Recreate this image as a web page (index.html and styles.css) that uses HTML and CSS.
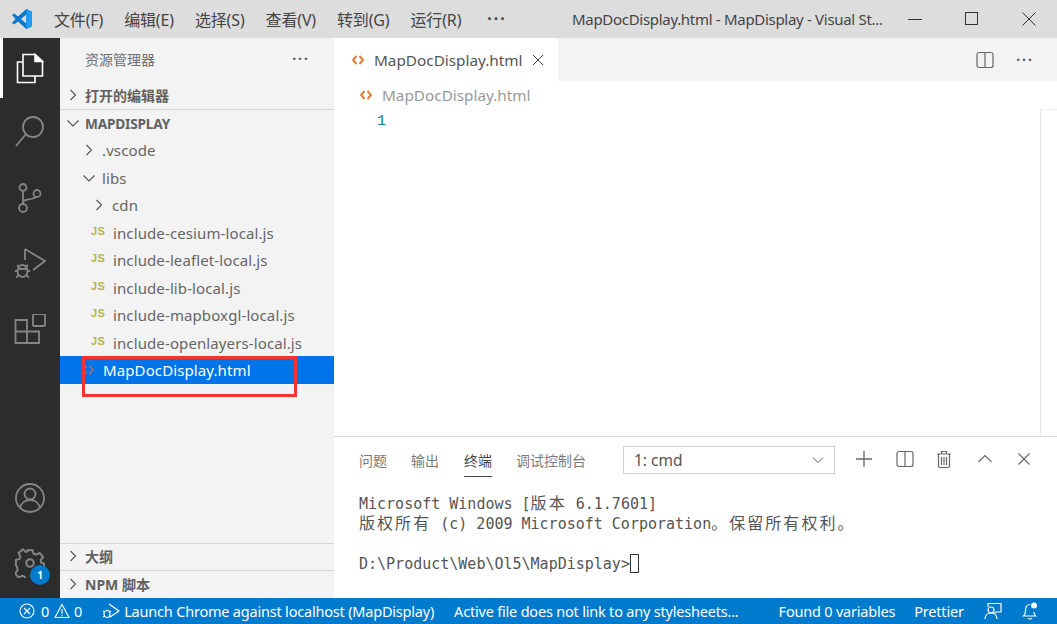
FILE: index.html
```html
<!DOCTYPE html>
<html lang="zh">
<head>
<meta charset="utf-8">
<title>MapDocDisplay.html - MapDisplay</title>
<link rel="stylesheet" href="styles.css">
</head>
<body>
<div class="app">
  <header class="titlebar">
    <svg class="logo" viewBox="0 0 20 20" width="20" height="20"><path fill="#0a78c8" fill-rule="evenodd" d="M14.300 0 20 2.800V17.200L14.300 20 6 12.500 2 15.500 0 14 3.600 10 0 6 2 4.500 6 7.500zM14.300 5.500 9 10l5.300 4.500z"/><path fill="#1f9cf0" d="M14.300 0 20 2.800V17.200L14.300 20z"/></svg>
    <nav class="menu">
      <span>文件(F)</span><span>编辑(E)</span><span>选择(S)</span><span>查看(V)</span><span>转到(G)</span><span>运行(R)</span><span class="menu-more">···</span>
    </nav>
    <div class="wintitle">MapDocDisplay.html - MapDisplay - Visual St...</div>
    <div class="winbtns">
      <svg width="14" height="14" viewBox="0 0 14 14"><path d="M0 7.500h14" stroke="#333" fill="none"/></svg>
      <svg width="14" height="14" viewBox="0 0 14 14"><rect x=".5" y=".5" width="12" height="12" stroke="#333" fill="none"/></svg>
      <svg width="14" height="14" viewBox="0 0 14 14"><path d="M.5.5l13 13M13.500.5l-13 13" stroke="#333" fill="none"/></svg>
    </div>
  </header>
  <div class="main">
    <aside class="activity">
      <div class="act act-active">
        <svg width="28" height="31" viewBox="0 0 28 31" fill="none" stroke="#fff" stroke-width="1.600"><path d="M7 9H1.500V29.500H19V23"/><path d="M7 1.500H19L26.500 8.500V23H7z"/><path d="M19 1.500V8.500H26.500z" fill="#fff"/></svg>
      </div>
      <div class="act act-search">
        <svg width="30" height="32" viewBox="0 0 30 32" fill="none" stroke="#858585" stroke-width="1.800"><circle cx="18" cy="11" r="10"/><path d="M11 18 1 30"/></svg>
      </div>
      <div class="act">
        <svg width="24" height="30" viewBox="0 0 24 30" fill="none" stroke="#858585" stroke-width="1.800"><circle cx="5" cy="4.500" r="3.500"/><circle cx="19" cy="10.500" r="3.500"/><circle cx="5" cy="25" r="4"/><path d="M5 8v13M5 19c1-3 4-2 8-3 4-1 5-2 5.500-2.500"/></svg>
      </div>
      <div class="act">
        <svg width="32" height="32" viewBox="0 0 32 32" fill="none" stroke="#858585" stroke-width="1.800"><path d="M11 1 31 13 19 22"/><path d="M11 1V12"/><ellipse cx="8.500" cy="23" rx="5" ry="6"/><path d="M3 17l3 2.500M14 17l-3 2.500M1 23h2.500M13.500 23H16M2 29.500l3-2.500M15 29.500 12 27M4 21h9"/></svg>
      </div>
      <div class="act">
        <svg width="32" height="32" viewBox="0 0 32 32" fill="none" stroke="#858585" stroke-width="1.800"><rect x="19" y="0" width="12" height="12" rx="1"/><path d="M1.500 6H13V29H1.500zM1.500 17.500H25V29H13"/></svg>
      </div>
      <div class="act-spacer"></div>
      <div class="act act-account">
        <svg width="30" height="30" viewBox="0 0 30 30" fill="none" stroke="#858585" stroke-width="1.800"><circle cx="15" cy="15" r="14"/><circle cx="15" cy="11" r="5.500"/><path d="M5 25c1-5 5-8 10-8s9 3 10 8"/></svg>
      </div>
      <div class="act act-gear">
        <svg width="30" height="30" viewBox="0 0 32 32" fill="none" stroke="#858585" stroke-width="2.200"><path d="M13 2h6l1 4 3 1 4-2 4 5-3 3 .500 3 3.500 1v6l-4 1-1 3 2 4-5 4-3-3-3 .500-1 3.500h-6l-1-4-3-1-4 2-4-5 3-3-.500-3L0 19v-6l4-1 1-3-2-4 5-4 3 3 2-.500z" transform="translate(1 .500) scale(.94)"/><circle cx="16" cy="16" r="4"/></svg>
        <span class="badge">1</span>
      </div>
    </aside>
    <aside class="sidebar">
      <div class="side-title"><span>资源管理器</span><span class="dots">···</span></div>
      <div class="section sec-open"><svg class="chev" viewBox="0 0 16 16"><path d="M5.500 3l5 5-5 5"/></svg><b>打开的编辑器</b></div>
      <div class="section sec-root"><svg class="chev" viewBox="0 0 16 16"><path d="M2.500 5.500 8 11l5.500-5.500"/></svg><b>MAPDISPLAY</b></div>
      <div class="tree">
        <div class="row l1"><svg class="chev" viewBox="0 0 16 16"><path d="M5.500 3l5 5-5 5"/></svg>.vscode</div>
        <div class="row l1"><svg class="chev" viewBox="0 0 16 16"><path d="M2.500 5.500 8 11l5.500-5.500"/></svg>libs</div>
        <div class="row l2"><svg class="chev" viewBox="0 0 16 16"><path d="M5.500 3l5 5-5 5"/></svg>cdn</div>
        <div class="row l3"><span class="js">JS</span>include-cesium-local.js</div>
        <div class="row l3"><span class="js">JS</span>include-leaflet-local.js</div>
        <div class="row l3"><span class="js">JS</span>include-lib-local.js</div>
        <div class="row l3"><span class="js">JS</span>include-mapboxgl-local.js</div>
        <div class="row l3"><span class="js">JS</span>include-openlayers-local.js</div>
        <div class="row selected">
          <svg class="sel-icon" width="12" height="10" viewBox="0 0 12 10"><path d="M4.500 1 1 5l3.500 4M7.500 1 11 5 7.500 9"/></svg>
          MapDocDisplay.html<div class="redbox"></div>
        </div>
      </div>
      <div class="side-spacer"></div>
      <div class="section sec-low"><svg class="chev" viewBox="0 0 16 16"><path d="M5.500 3l5 5-5 5"/></svg><b>大纲</b></div>
      <div class="section sec-low"><svg class="chev" viewBox="0 0 16 16"><path d="M5.500 3l5 5-5 5"/></svg><b>NPM 脚本</b></div>
    </aside>
    <section class="work">
      <div class="tabs">
        <div class="tab">
          <svg class="html-icon" width="12" height="10" viewBox="0 0 12 10"><path d="M4.500 1 1 5l3.500 4M7.500 1 11 5 7.500 9"/></svg>
          <span class="tab-name">MapDocDisplay.html</span>
          <svg width="12" height="12" viewBox="0 0 12 12"><path d="M1 1l10 10M11 1 1 11" stroke="#444" fill="none"/></svg>
        </div>
        <div class="tab-actions">
          <svg width="18" height="18" viewBox="0 0 18 18" fill="none" stroke="#666" stroke-width="1.200"><rect x="1" y="1.500" width="16" height="15" rx="2"/><path d="M9 1.500v15"/></svg>
          <span class="dots">···</span>
        </div>
      </div>
      <div class="crumb"><svg class="html-icon" width="12" height="10" viewBox="0 0 12 10"><path d="M4.500 1 1 5l3.500 4M7.500 1 11 5 7.500 9"/></svg>MapDocDisplay.html</div>
      <div class="editor"><span class="ln">1</span><div class="ruler"></div></div>
      <div class="panel">
        <div class="panel-head">
          <span class="ptab">问题</span><span class="ptab">输出</span><span class="ptab active">终端</span><span class="ptab">调试控制台</span>
          <div class="select"><span>1: cmd</span><svg width="14" height="14" viewBox="0 0 14 14"><path d="M2 4.500l5 5 5-5" fill="none" stroke="#666"/></svg></div>
          <div class="panel-actions">
            <svg width="18" height="18" viewBox="0 0 18 18"><path d="M9 1v16M1 9h16" stroke="#666" stroke-width="1.300" fill="none"/></svg>
            <svg width="18" height="18" viewBox="0 0 18 18" fill="none" stroke="#666" stroke-width="1.200"><rect x="1" y="1.500" width="16" height="15" rx="2"/><path d="M9 1.500v15"/></svg>
            <svg class="a-trash" width="18" height="18" viewBox="0 0 18 18" fill="none" stroke="#666" stroke-width="1.200"><path d="M2 4h14M6.500 4V1.500h5V4M3.500 4v12q0 1.500 1.500 1.500h8q1.500 0 1.500-1.500V4M6.500 7v8M9 7v8M11.500 7v8"/></svg>
            <svg class="a-up" width="16" height="16" viewBox="0 0 16 16"><path d="M1.500 11 8 4.500 14.500 11" fill="none" stroke="#666" stroke-width="1.100"/></svg>
            <svg width="16" height="16" viewBox="0 0 16 16"><path d="M2.500 2.500l11 11M13.500 2.500l-11 11" fill="none" stroke="#666" stroke-width="1.100"/></svg>
          </div>
        </div>
        <pre class="term">Microsoft Windows [<span class="cjk">版本</span> 6.1.7601]
<span class="cjk">版权所有</span> (c) 2009 Microsoft Corporation<span class="cjk">。保留所有权利。</span>

D:\Product\Web\Ol5\MapDisplay&gt;<span class="cursor"></span></pre>
      </div>
    </section>
  </div>
  <footer class="status">
    <svg width="16" height="16" viewBox="0 0 16 16" fill="none" stroke="#fff" stroke-width="1.100"><circle cx="8" cy="8" r="7"/><path d="M5 5l6 6M11 5l-6 6"/></svg><span class="s-num">0</span>
    <svg class="s-warn" width="16" height="16" viewBox="0 0 16 16" fill="none" stroke="#fff" stroke-width="1.100"><path d="M8 1.500 15 14.500H1zM8 6v5M8 12v1.500"/></svg><span class="s-num2">0</span>
    <svg class="s-debug" width="18" height="16" viewBox="0 0 18 16" fill="none" stroke="#fff" stroke-width="1.200"><path d="M7 1l10 7-9 6"/><ellipse cx="5" cy="11" rx="3" ry="3.500"/><path d="M1 8l2 1M9 8l-2 1M1 14l2-1M9 14l-2-1"/></svg>
    <span>Launch Chrome against localhost (MapDisplay)</span>
    <span class="s-active">Active file does not link to any stylesheets...</span>
    <span class="s-right">Found 0 variables</span>
    <span class="s-prettier">Prettier</span>
    <svg class="s-feedback" width="18" height="18" viewBox="0 0 18 18" fill="none" stroke="#fff" stroke-width="1.200"><path d="M4 5V1.500H17V10H12L10 12"/><circle cx="7" cy="8" r="3"/><path d="M1 17c0-4 3-6 6-6s6 2 6 6"/></svg>
    <svg class="s-bell" width="16" height="18" viewBox="0 0 16 18" fill="none" stroke="#fff" stroke-width="1.200"><path d="M8 2.500C4.500 2.500 3.500 6 3.500 9c0 3-1 4-2 5h12c-1-1-1.500-2-1.500-4M6 16c1 1.500 3 1.500 4 0"/><circle cx="12" cy="3.500" r="3" fill="#fff" stroke="none"/></svg>
  </footer>
</div>
</body>
</html>
```

FILE: styles.css
```css
* { box-sizing: border-box; }
html, body { margin: 0; height: 100%; }
body { font-family: "Noto Sans", "Noto Sans CJK SC", sans-serif; font-size: 13px; color: #616161; overflow: hidden; background: #fff; }
.app { display: flex; flex-direction: column; width: 1057px; height: 624px; }

.titlebar { height: 38px; flex: none; background: #ddd; display: flex; align-items: center; color: #333; }
.logo { margin-left: 12px; flex: none; }
.menu { display: flex; margin-left: 22px; font-size: 16px; letter-spacing: -.15px; gap: 21px; white-space: nowrap; width: 518px; flex: none; color: #444; }
.menu-more { letter-spacing: 2px; font-weight: 700; margin-left: 5px; }
.wintitle { width: 336px; flex: none; font-size: 15px; letter-spacing: -.3px; white-space: nowrap; color: #444; }
.winbtns { display: flex; gap: 43px; align-items: center; }

.main { flex: 1; display: flex; min-height: 0; }

.activity { width: 60px; flex: none; background: #2c2c2c; display: flex; flex-direction: column; }
.act { height: 66px; display: flex; align-items: center; justify-content: center; position: relative; flex: none; }
.act-active { height: 60px; border-left: 3px solid #fff; padding-right: 3px; }
.act-search { margin-top: 1px; }
.act-spacer { flex: 1; }
.act-account { padding-bottom: 2px; }
.act-gear { padding-bottom: 4px; }
.badge { position: absolute; left: 30px; top: 33px; width: 20px; height: 20px; border-radius: 50%; background: #007acc; color: #fff; font-size: 10px; font-weight: 700; display: flex; align-items: center; justify-content: center; }

.sidebar { width: 274px; flex: none; background: #f3f3f3; display: flex; flex-direction: column; }
.side-title { height: 44px; display: flex; align-items: center; justify-content: space-between; padding: 0 24px 3px 25px; font-size: 14px; color: #6f6f6f; flex: none; }
.dots { font-weight: 700; letter-spacing: 2px; font-size: 14px; color: #555; }
.section { height: 28px; display: flex; align-items: center; font-size: 14px; color: #616161; padding-left: 5px; flex: none; }
.section b { font-weight: 700; margin-left: 4px; }
.sec-open { border-bottom: 1px solid #d6d6d6; padding-bottom: 2px; }
.sec-root { height: 26.500px; }
.sec-low { border-top: 1px solid #d6d6d6; padding-bottom: 2px; }
.side-spacer + .sec-low { height: 27px; }
.sec-root b { font-size: 13.700px; letter-spacing: -.2px; }
.chev { width: 16px; height: 16px; flex: none; fill: none; stroke: #555; stroke-width: 1.100; }
.tree { font-size: 15px; color: #666; letter-spacing: .11px; flex: none; }
.row { height: 27.500px; display: flex; align-items: center; white-space: nowrap; position: relative; }
.l1 { padding-left: 21px; }
.l1 .chev { margin-right: 5px; }
.l2 { padding-left: 31px; }
.l2 .chev { margin-right: 5px; }
.l3 { padding-left: 31px; }
.js { width: 22px; color: #b5b54a; font-size: 11px; font-weight: 700; font-family: "Liberation Sans", sans-serif; letter-spacing: .5px; margin-bottom: 4px; }
.selected { background: #0074e8; color: #fff; padding-left: 43px; height: 28px; margin-top: -.5px; }
.sel-icon { position: absolute; left: 22px; top: 9px; fill: none; stroke: #b5696a; stroke-width: 1.500; }
.redbox { position: absolute; left: 22px; top: 0; width: 215px; height: 41px; border: 3px solid #f73232; }
.side-spacer { flex: 1; }

.work { flex: 1; min-width: 0; display: flex; flex-direction: column; }
.tabs { height: 43px; flex: none; background: #f3f3f3; display: flex; justify-content: space-between; }
.tab { width: 224px; background: #fff; display: flex; align-items: center; padding-left: 18px; font-size: 15.300px; color: #555; }
.html-icon { flex: none; margin-right: 10px; fill: none; stroke: #e37933; stroke-width: 1.900; }
.tab-name { width: 158px; white-space: nowrap; }
.tab-actions { display: flex; align-items: center; gap: 22px; padding-right: 23px; }
.crumb { height: 28px; flex: none; display: flex; align-items: center; padding-left: 26px; font-size: 15.300px; color: #999; }
.editor { flex: 1; min-height: 0; position: relative; font-family: "Liberation Mono", monospace; }
.ln { position: absolute; left: 43px; top: 3px; font-size: 15px; color: #237893; line-height: 20px; }
.ruler { position: absolute; right: 0; top: 0; width: 17px; bottom: 0; border-left: 1px solid #e8e8e8; border-top: 1px solid #eee; }

.panel { height: 162px; flex: none; border-top: 1px solid #d6d6d6; padding: 0 25px; }
.panel-head { height: 48px; display: flex; align-items: center; position: relative; }
.ptab { font-size: 14px; color: #7a7a7a; margin-right: 24px; height: 35px; line-height: 35px; position: relative; top: -1px; }
.ptab:nth-child(2) { margin-right: 25px; }
.ptab:nth-child(4) { margin-right: 0; }
.ptab.active { color: #444; }
.ptab.active::after { content: ""; position: absolute; left: 0; right: 0; bottom: 1px; height: 1px; background: #444; }
.select { width: 212px; height: 28px; margin-left: 37px; margin-top: -3px; border: 1px solid #cecece; display: flex; align-items: center; justify-content: space-between; padding: 0 9px 0 10px; font-size: 15.500px; color: #555; flex: none; }
.panel-actions { display: flex; align-items: center; gap: 23px; margin-left: 20px; margin-top: -4px; flex: none; }
.a-trash { margin-left: -2px; }
.a-up { margin-left: 1px; }
.term { margin: 9px 0 0; font-family: "DejaVu Sans Mono", "Noto Sans CJK SC", monospace; font-size: 15px; line-height: 20px; color: #555; }
.cjk { font-family: "Noto Sans CJK SC", sans-serif; font-size: 16px; letter-spacing: 2.050px; line-height: 1; }
.cursor { display: inline-block; width: 9px; height: 19px; border: 1px solid #333; vertical-align: -4px; }

.status { height: 26px; flex: none; background: #007acc; color: #fff; display: flex; align-items: center; padding-left: 19px; font-size: 14.500px; letter-spacing: -.2px; white-space: nowrap; }
.s-num { margin-left: 6px; }
.s-warn { margin-left: 5px; }
.s-num2 { margin-left: 4px; }
.s-debug { margin-left: 20px; margin-right: 4px; }
.s-active { margin-left: 20px; }
.s-right { margin-left: 40px; }
.s-prettier { margin-left: 19px; }
.s-feedback { margin-left: 20px; }
.s-bell { margin-left: 20px; }
```
